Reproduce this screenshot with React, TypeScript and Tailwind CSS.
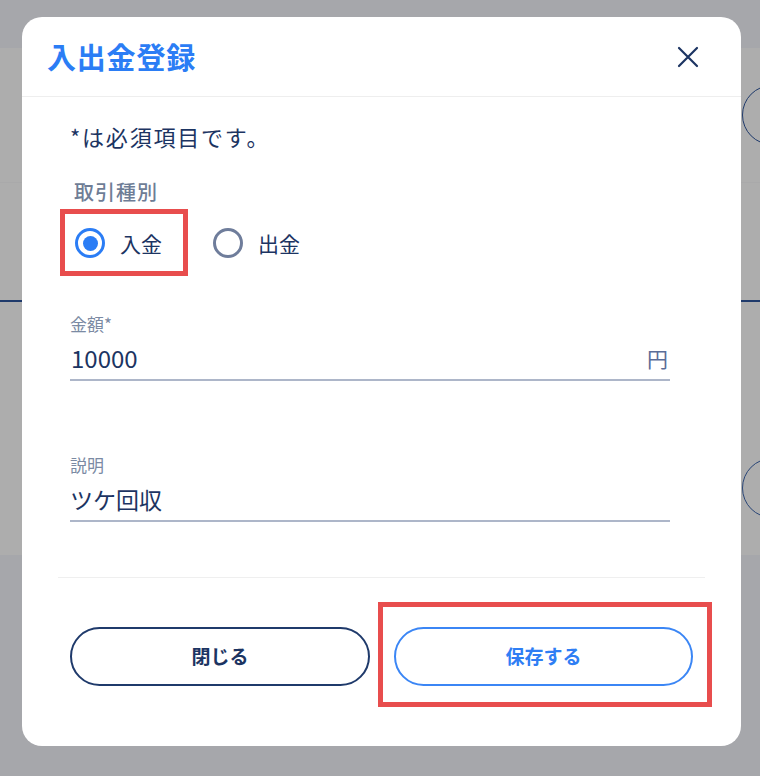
import React from "react";

function CloseIcon() {
  return (
    <svg width="22" height="22" viewBox="0 0 22 22" fill="none">
      <path d="M2 2L20 20M20 2L2 20" stroke="#1c3462" strokeWidth="2.2" strokeLinecap="round" />
    </svg>
  );
}

function Radio({ checked, label }: { checked: boolean; label: string }) {
  return (
    <div className="flex items-center gap-[15px]">
      {checked ? (
        <span className="w-[30px] h-[30px] rounded-full border-[3px] border-[#2b7df5] flex items-center justify-center">
          <span className="w-[15px] h-[15px] rounded-full bg-[#2b7df5]" />
        </span>
      ) : (
        <span className="w-[30px] h-[30px] rounded-full border-[3px] border-[#6f7d9b]" />
      )}
      <span className="text-[21px] leading-[30px] text-[#1c3462]">{label}</span>
    </div>
  );
}

export default function App() {
  return (
    <div className="relative w-[760px] h-[776px] overflow-hidden bg-[#a6a7ab] font-['Noto_Sans_CJK_JP','Noto_Sans',sans-serif]">
      {/* dimmed page behind */}
      <div className="flex flex-col">
        <div className="h-[48px] bg-[#a6a7ab]" />
        <div className="h-[135px] bg-[#adadad] border-b border-[#a9a9aa] flex items-start justify-end">
          <div className="mt-[37px] mr-[-42px] w-[60px] h-[60px] rounded-full border-[1.5px] border-[#1f3a6b]" />
        </div>
        <div className="h-[117px] bg-[#adadad]" />
        <div className="h-[2px] bg-[#1f3a6b]" />
        <div className="h-[253px] bg-[#adadad] flex items-start justify-end">
          <div className="mt-[156px] mr-[-42px] w-[60px] h-[60px] rounded-full border-[1.5px] border-[#2a4677]" />
        </div>
        <div className="flex-1 bg-[#a6a7ab]" />
      </div>

      {/* modal */}
      <div className="absolute left-[22px] top-[17px] w-[719px] h-[729px] bg-white rounded-[20px] flex flex-col">
        <div className="h-[80px] shrink-0 flex items-center justify-between pl-[25px] pr-[42px] border-b border-[#eeeeee]">
          <h1 className="text-[29px] leading-[36px] font-bold text-[#2b7df5] tracking-[0.8px] mt-[-2px]">入出金登録</h1>
          <CloseIcon />
        </div>

        <div className="flex flex-col px-[48px]">
          <p className="mt-[25px] h-[28px] leading-[28px] text-[22px] tracking-[1.8px] text-[#1c3462]">*は必須項目です。</p>
          <p className="mt-[29px] ml-[4px] h-[26px] leading-[26px] text-[20px] tracking-[1px] font-medium text-[#6e7d96]">取引種別</p>
          <div className="mt-[23px] h-[30px] flex items-center gap-[51px] ml-[5px]">
            <Radio checked label="入金" />
            <Radio checked={false} label="出金" />
          </div>

          <p className="mt-[56px] h-[20px] leading-[20px] text-[17px] text-[#7b8aa3]">金額*</p>
          <div className="mt-[8px] w-[600px] h-[39px] pb-[5px] border-b-2 border-[#adb6c9] flex items-center justify-between">
            <span className="text-[24px] leading-[32px] text-[#1c3462] pl-px">10000</span>
            <span className="text-[21px] leading-[32px] text-[#5a6d98] pr-[2px]">円</span>
          </div>

          <p className="mt-[74px] h-[20px] leading-[20px] text-[17px] text-[#7b8aa3]">説明</p>
          <div className="mt-[8px] w-[600px] h-[39px] pb-[5px] border-b-2 border-[#adb6c9] flex items-center">
            <span className="text-[23px] leading-[32px] text-[#1c3462]">ツケ回収</span>
          </div>
        </div>

        <div className="mt-[55px] mx-[36px] h-px bg-[#efefef]" />

        <div className="mt-[49px] px-[48px] flex gap-[24px]">
          <button className="w-[300px] h-[59px] rounded-full border-2 border-[#1f3a6b] text-[19px] font-bold text-[#1c3462]">
            閉じる
          </button>
          <button className="w-[299px] h-[59px] rounded-full border-2 border-[#3b86f5] text-[19px] font-bold text-[#2f7ef4]">
            保存する
          </button>
        </div>
      </div>

      {/* annotation boxes */}
      <div className="absolute left-[60px] top-[209px] w-[128px] h-[67px] border-[5px] border-[#e84d4d]" />
      <div className="absolute left-[378px] top-[602px] w-[334px] h-[105px] border-[5px] border-[#e84d4d]" />
    </div>
  );
}
